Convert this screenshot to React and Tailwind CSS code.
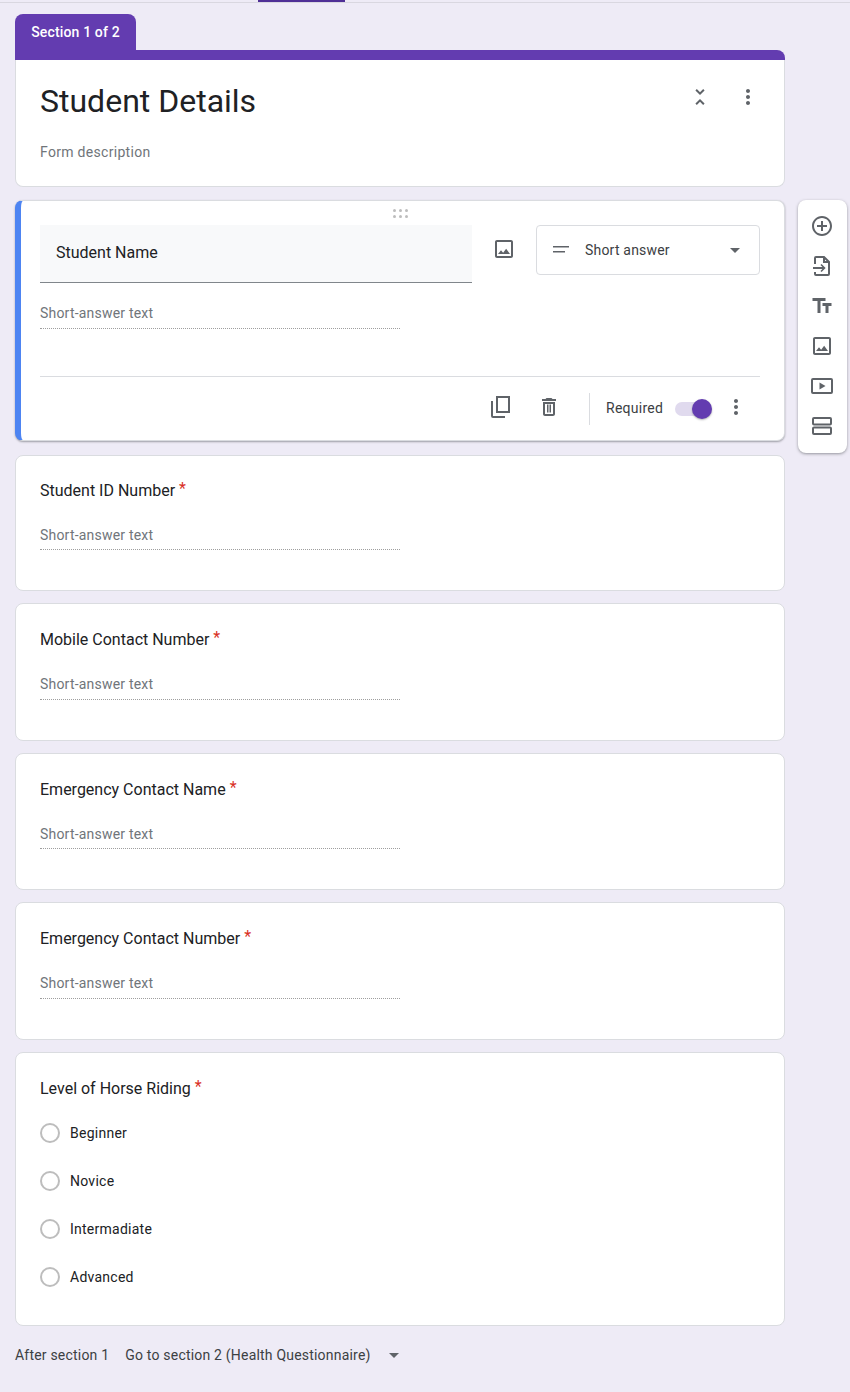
import React from 'react';

const MoreVert = ({ className }) => (
    <svg viewBox="0 0 24 24" className={className} fill="currentColor">
        <path d="M12 8c1.1 0 2-.9 2-2s-.9-2-2-2-2 .9-2 2 .9 2 2 2zm0 2c-1.1 0-2 .9-2 2s.9 2 2 2 2-.9 2-2-.9-2-2-2zm0 6c-1.1 0-2 .9-2 2s.9 2 2 2 2-.9 2-2-.9-2-2-2z" />
    </svg>
);

const ImageIcon = ({ className }) => (
    <svg viewBox="0 0 24 24" className={className} fill="currentColor">
        <path d="M19 5v14H5V5h14m0-2H5c-1.1 0-2 .9-2 2v14c0 1.1.9 2 2 2h14c1.1 0 2-.9 2-2V5c0-1.1-.9-2-2-2zm-4.86 8.86l-3 3.87L9 13.14 6 17h12l-3.86-5.14z" />
    </svg>
);

const DropArrow = ({ className }) => (
    <svg viewBox="0 0 24 24" className={className} fill="currentColor">
        <path d="M7 10l5 5 5-5z" />
    </svg>
);

function QuestionTitle({ title }) {
    return (
        <div className="flex items-start text-[16px] leading-6 text-[#202124]">
            <span>{title}</span>
            <span className="ml-1 -mt-[2px] text-[#d93025]">*</span>
        </div>
    );
}

function ShortAnswerLine({ bottom = 'pb-[5px]' }) {
    return (
        <div className={`${bottom} w-[360px] border-b border-dotted border-[#9e9e9e] text-[14px] leading-5 tracking-[0.2px] text-[#70757a]`}>
            Short-answer text
        </div>
    );
}

function ShortCard({ title, height, top, bottom }) {
    return (
        <div className={`${height} ${top} rounded-lg border border-[#dadce0] bg-white pl-[24px]`}>
            <QuestionTitle title={title} />
            <div className="mt-[22px]">
                <ShortAnswerLine bottom={bottom} />
            </div>
        </div>
    );
}

function RadioRow({ label }) {
    return (
        <div className="flex h-[48px] items-center">
            <div className="h-5 w-5 rounded-full border-2 border-[#bdbdbd]" />
            <span className="ml-[10px] text-[14px] tracking-[0.25px] text-[#202124]">{label}</span>
        </div>
    );
}

function SideIcon({ children }) {
    return <div className="flex h-10 items-center justify-center pr-px text-[#5f6368]">{children}</div>;
}

function App() {
    return (
        <div className="h-[1392px] overflow-hidden bg-[#eeebf6] font-['Roboto',sans-serif]">
            <div className="h-[3px] border-b border-[#d9d7e0]">
                <div className="ml-[258px] h-[2px] w-[87px] bg-[#4f2f96]" />
            </div>

            <div className="flex items-start pl-[15px] pt-[11px]">
                <div className="w-[770px]">
                    <div className="flex h-9 w-[121px] items-center justify-center rounded-t-lg bg-[#633cb0] text-[14px] font-medium tracking-[0.15px] text-white">
                        Section 1 of 2
                    </div>
                    <div className="h-[10px] rounded-tr-lg bg-[#633cb0]" />
                    <div className="h-[127px] rounded-b-lg border-x border-b border-[#dadce0] bg-white pl-[24px]">
                        <div className="flex items-start justify-between">
                            <div className="pt-[21px] text-[32px] leading-10 text-[#202124]">Student Details</div>
                            <div className="flex items-center pr-[24px] pt-[25px] text-[#5f6368]">
                                <svg viewBox="0 0 24 24" className="h-6 w-6" fill="currentColor">
                                    <path d="M7.41 18.59L8.83 20 12 16.83 15.17 20l1.41-1.41L12 14l-4.59 4.59zm9.18-13.18L15.17 4 12 7.17 8.83 4 7.41 5.41 12 10l4.59-4.59z" />
                                </svg>
                                <MoreVert className="ml-6 h-6 w-6" />
                            </div>
                        </div>
                        <div className="mt-[21px] text-[14px] leading-5 tracking-[0.3px] text-[#70757a]">Form description</div>
                    </div>

                    <div className="relative mt-[13px] h-[241px] rounded-lg border-y border-r border-[#dadce0] border-l-[6px] border-l-[#4d84f2] bg-white pl-[19px] pr-[24px] shadow-[0_1px_2px_rgba(60,64,67,0.45)]">
                        <div className="absolute left-[372px] top-[8px] grid grid-cols-3 gap-[3px]">
                            {[0, 1, 2, 3, 4, 5].map((dot) => (
                                <div key={dot} className="h-[3px] w-[3px] rounded-full bg-[#bdbdbd]" />
                            ))}
                        </div>
                        <div className="flex items-start pt-[24px]">
                            <div className="flex h-[58px] w-[432px] items-center border-b border-[#80868b] bg-[#f8f9fa] pb-[2px] pl-4 text-[16px] text-[#202124]">
                                Student Name
                            </div>
                            <ImageIcon className="ml-[20px] mt-[12px] h-6 w-6 text-[#5f6368]" />
                            <div className="ml-[20px] flex h-[50px] w-[224px] items-center rounded border border-[#dadce0] pl-[12px] pr-[12px]">
                                <svg viewBox="0 0 24 24" className="h-6 w-6 text-[#5f6368]" fill="currentColor">
                                    <path d="M4 8h16v1.5H4zM4 13h12v1.5H4z" />
                                </svg>
                                <span className="ml-[12px] flex-1 text-[14px] tracking-[0.2px] text-[#3c4043]">Short answer</span>
                                <DropArrow className="h-6 w-6 text-[#5f6368]" />
                            </div>
                        </div>
                        <div className="mt-[20px]">
                            <ShortAnswerLine />
                        </div>
                        <div className="mt-[47px] flex h-[60px] items-center border-t border-[#dadce0] text-[#5f6368]">
                            <div className="ml-[449px] flex items-center">
                                <svg viewBox="0 0 24 24" className="h-6 w-6" fill="none" stroke="currentColor" strokeWidth="2">
                                    <path d="M8 2h12v15H8z" />
                                    <path d="M3 6v15c0 .6.4 1 1 1h12" />
                                </svg>
                                <svg viewBox="0 0 24 24" className="ml-6 h-6 w-6" fill="currentColor">
                                    <path d="M16 9v10H8V9h8m-1.5-6h-5l-1 1H5v2h14V4h-3.5l-1-1zM18 7H6v12c0 1.1.9 2 2 2h8c1.1 0 2-.9 2-2V7z" />
                                    <path d="M10 9.5h1.5v8H10zM12.5 9.5H14v8h-1.5z" />
                                </svg>
                                <div className="ml-[28px] mt-[4px] h-8 border-l border-[#dadce0]" />
                                <span className="ml-4 mt-[3px] text-[14px] tracking-[0.25px] text-[#3c4043]">Required</span>
                                <div className="relative ml-3 mt-[5px] h-[14px] w-[36px] rounded-full bg-[#e0daee]">
                                    <div className="absolute -top-[3px] left-[17px] h-5 w-5 rounded-full bg-[#633cb0] shadow-[0_1px_2px_rgba(60,64,67,0.4)]" />
                                </div>
                                <MoreVert className="ml-[13px] h-6 w-6" />
                            </div>
                        </div>
                    </div>

                    <div className="mt-[14px] flex flex-col gap-[12px]">
                        <ShortCard title="Student ID Number" height="h-[136px]" top="pt-[23px]" bottom="pb-[4px]" />
                        <ShortCard title="Mobile Contact Number" height="h-[138px]" top="pt-[24px]" />
                        <ShortCard title="Emergency Contact Name" height="h-[137px]" top="pt-[24px]" bottom="pb-[4px]" />
                        <ShortCard title="Emergency Contact Number" height="h-[138px]" top="pt-[24px]" />

                        <div className="h-[274px] rounded-lg border border-[#dadce0] bg-white pl-[24px] pt-[24px]">
                            <QuestionTitle title="Level of Horse Riding" />
                            <div className="mt-[8px]">
                                {['Beginner', 'Novice', 'Intermadiate', 'Advanced'].map((label) => (
                                    <RadioRow key={label} label={label} />
                                ))}
                            </div>
                        </div>
                    </div>

                    <div className="mt-[17px] flex items-center text-[14px] leading-6 tracking-[0.2px] text-[#3c4043]">
                        <span>After section 1</span>
                        <span className="ml-[16px]">Go to section 2 (Health Questionnaire)</span>
                        <DropArrow className="ml-[11px] h-6 w-6 text-[#5f6368]" />
                    </div>
                </div>

                <div className="ml-[13px] mt-[186px] flex h-[253px] w-[49px] flex-col rounded-lg bg-white py-[6px] shadow-[0_1px_3px_rgba(60,64,67,0.5)]">
                    <SideIcon>
                        <svg viewBox="0 0 24 24" className="h-6 w-6" fill="currentColor">
                            <path d="M13 7h-2v4H7v2h4v4h2v-4h4v-2h-4V7zm-1-5C6.48 2 2 6.48 2 12s4.48 10 10 10 10-4.48 10-10S17.52 2 12 2zm0 18c-4.41 0-8-3.59-8-8s3.59-8 8-8 8 3.59 8 8-3.59 8-8 8z" />
                        </svg>
                    </SideIcon>
                    <SideIcon>
                        <svg viewBox="0 0 24 24" className="h-6 w-6" fill="none" stroke="currentColor" strokeWidth="2">
                            <path d="M5 10V4c0-.6.4-1 1-1h8l5 5v12c0 .6-.4 1-1 1H6c-.6 0-1-.4-1-1v-2" />
                            <path d="M3 14h11" />
                            <path d="M14 3v5h5" />
                            <path d="M11 10.5l3.5 3.5-3.5 3.5" strokeWidth="1.6" />
                        </svg>
                    </SideIcon>
                    <SideIcon>
                        <svg viewBox="0 0 24 24" className="h-6 w-6" fill="currentColor">
                            <path d="M2.5 4v3h5v12h3V7h5V4h-13zm19 5h-9v3h3v7h3v-7h3V9z" />
                        </svg>
                    </SideIcon>
                    <SideIcon>
                        <ImageIcon className="h-6 w-6" />
                    </SideIcon>
                    <SideIcon>
                        <svg viewBox="0 0 24 24" className="h-6 w-6" fill="none" stroke="currentColor" strokeWidth="2">
                            <rect x="2" y="5" width="20" height="14" rx="1" />
                            <path d="M9.5 8.5v7l6-3.5z" fill="currentColor" stroke="none" />
                        </svg>
                    </SideIcon>
                    <SideIcon>
                        <svg viewBox="0 0 24 24" className="h-6 w-6" fill="none" stroke="currentColor" strokeWidth="2">
                            <rect x="3" y="4" width="18" height="6.5" rx="1" />
                            <rect x="3" y="13.5" width="18" height="6.5" rx="1" />
                        </svg>
                    </SideIcon>
                </div>
            </div>
        </div>
    );
}

export default App;
